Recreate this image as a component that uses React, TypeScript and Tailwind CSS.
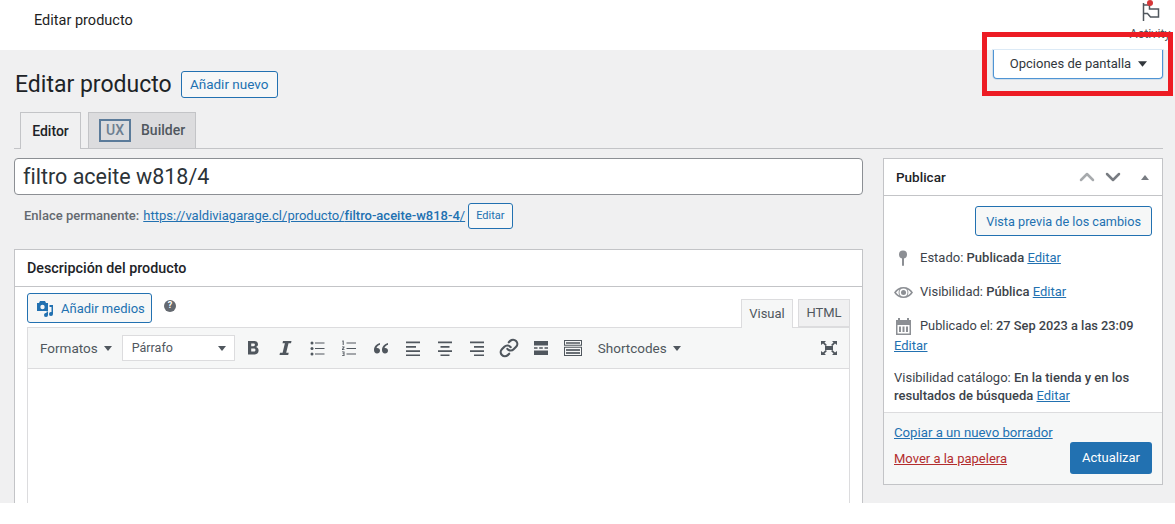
import { ChevronDown, ChevronUp, Link } from 'lucide-react'

const ui = "font-['Roboto',sans-serif]"

function Caret({ className = '' }: { className?: string }) {
  return (
    <svg width="8" height="5" viewBox="0 0 8 5" className={className}>
      <path d="M0 0h8L4 5z" fill="currentColor" />
    </svg>
  )
}

function ToolIcon({ children }: { children: React.ReactNode }) {
  return (
    <svg width="20" height="20" viewBox="0 0 20 20" className="text-[#50575e]" fill="currentColor">
      {children}
    </svg>
  )
}

const tools = [
  <path key="b" fillRule="evenodd" d="M5 3h6c2.500 0 4 1.200 4 3.300 0 1.400-.8 2.300-2 2.800 1.600.4 2.600 1.600 2.600 3.400 0 2.500-1.800 4-4.600 4H5zm3.200 2.400v2.800h2.200c1 0 1.500-.5 1.500-1.400s-.5-1.400-1.500-1.400zm0 5.100v3.100h2.500c1.200 0 1.800-.6 1.800-1.550s-.6-1.550-1.800-1.550z" />,
  <path key="i" d="M8 3h8.500L16 5.200h-2.500L11.200 14.800h2.500l-.5 2.200H4.500l.5-2.200h2.600L9.900 5.200H7.500z" />,
  <g key="ul"><circle cx="5" cy="5" r="1.500" /><circle cx="5" cy="10.500" r="1.500" /><circle cx="5" cy="16" r="1.500" /><path d="M8 4.400h9.500v1.200H8zM8 9.900h9.500v1.200H8zM8 15.400h9.500v1.200H8z" /></g>,
  <g key="ol"><path d="M7.500 4.400H17v1.200H7.500zM7.500 9.900H17v1.200H7.500zM7.500 15.400H17v1.200H7.500z" /><path d="M3.500 2.500h1.200v4.500H3.700V3.500h-.7zM3 8.500h2.500v1L4 11.200h1.500v.8H3v-.9l1.500-1.800H3zM3 13.500h2.500v4.500H3v-.7h1.500v-1.200h-1v-.6h1v-1.300H3z" /></g>,
  <path key="q" d="M9 5C5.500 6 3 8.500 3 12c0 2 1.200 3.500 3 3.500S9 14.200 9 12.700c0-1.600-1.200-2.700-2.700-2.700-.3 0-.6 0-.8.100.4-1.400 1.800-2.700 3.500-3.300zm8 0c-3.500 1-6 3.500-6 7 0 2 1.200 3.500 3 3.500s3-1.300 3-2.800c0-1.600-1.200-2.700-2.700-2.700-.3 0-.6 0-.8.100.4-1.400 1.800-2.700 3.500-3.300z" />,
  <path key="al" d="M3 3.500h14V5.200H3zM3 8h10v1.700H3zM3 12.300h14V14H3zM3 16.500h14v1.500H3z" />,
  <path key="ac" d="M3 3.500h14V5.200H3zM5.500 8h9v1.700h-9zM3 12.300h14V14H3zM5.500 16.500h9V18h-9z" />,
  <path key="ar" d="M3 3.500h14V5.200H3zM7 8h10v1.700H7zM3 12.300h14V14H3zM7 16.500h10V18H7z" />,
  <Link key="ln" x="0" y="0" width="20" height="20" strokeWidth={2.600} fill="none" />,
  <path key="mr" d="M3 3h14v4.500H3zM3 9.300h3.500v1.400H3zM8.200 9.300h3.600v1.400H8.200zM13.500 9.300H17v1.400h-3.500zM3 12.500h14V17H3z" />,
  <g key="kb">
    <path fillRule="evenodd" d="M1 2h18v5.800H1zm1 1v3.800h16V3zM1 8.800h18V18H1zm1 1V17h16V9.800z" />
    <path d="M3 4h14v2H3z" opacity=".75" />
    <path d="M3 11h14v2H3zM3 14h14v2H3z" opacity=".85" />
  </g>,
]

export default function App() {
  return (
    <div className={`${ui} relative h-[524px] w-[1175px] overflow-hidden bg-white text-[13px] text-[#3c434a] [font-variant-ligatures:none]`}>
      <header className="flex h-[50px] items-center pl-[34px] pb-[8px] text-[14.500px] text-[#1e1e1e]">Editar producto</header>

      <main className="flex h-[453px] flex-col overflow-hidden bg-[#f0f0f1] pl-[14px] pr-[12px] pt-[21px]">
        <div className="flex h-[27px] items-center gap-[9px]">
          <h1 className="pl-px text-[23px] leading-[27px] text-[#1d2327]">Editar producto</h1>
          <button className="h-[27px] w-[97px] rounded-[3px] border border-[#2271b1] bg-[#f6f7f7] text-[13.500px] text-[#2271b1]">Añadir nuevo</button>
        </div>

        <div className="mt-[14px] flex h-[37px] gap-[7px] border-b border-[#c3c4c7] pl-[6px]">
          <div className="flex h-[37px] w-[61px] items-center justify-center border border-b-0 border-[#c3c4c7] bg-[#f0f0f1] text-[14px] font-medium text-[#1d2327]">Editor</div>
          <div className="flex h-[36px] w-[108px] items-center gap-[10px] border border-b-0 border-[#c3c4c7] bg-[#dcdcde] pl-[10px] text-[14px] text-[#50575e]">
            <span className="flex h-[23px] w-[32px] items-center justify-center border-2 border-[#5b7b9a] font-medium text-[#6d7f91]">UX</span>
            <span className="font-medium">Builder</span>
          </div>
        </div>

        <div className="mt-[9px] flex gap-[20px]">
          <section className="w-[849px]">
            <div className="flex h-[37px] items-center rounded-[4px] border border-[#8c8f94] bg-white pl-[8px] pt-[2px] text-[21.500px] text-[#2c3338]">filtro aceite w818/4</div>
            <div className="mt-[8px] flex h-[26px] items-center pl-[10px] text-[13px] text-[#646970]">
              <span className="font-medium">Enlace permanente:</span>
              <a className="ml-[4px] text-[#2271b1] underline">https://valdiviagarage.cl/producto/<span className="font-medium">filtro-aceite-w818-4</span>/</a>
              <button className="ml-[3px] h-[26px] rounded-[3px] border border-[#2271b1] bg-[#f6f7f7] px-[7px] text-[11px] text-[#2271b1]">Editar</button>
            </div>

            <div className="mt-[20px] h-[260px] border border-[#c3c4c7] bg-white">
              <div className="flex h-[37px] items-center border-b border-[#c3c4c7] pl-[12px] pt-px text-[14.300px] font-medium text-[#1d2327]">Descripción del producto</div>
              <div className="px-[12px] pt-[6px]">
                <div className="flex h-[35px] items-start">
                  <button className="flex h-[30px] w-[125px] items-center gap-[7px] rounded-[3px] border border-[#2271b1] bg-[#f6f7f7] pl-[8px] pt-px text-[#2271b1]">
                    <svg width="18" height="18" viewBox="0 0 18 18" fill="currentColor">
                      <path fillRule="evenodd" d="M1 3h2l1-2h5l1 2h2v8H1zm5.500 1.800a2.200 2.200 0 100 4.400 2.200 2.200 0 000-4.400z" />
                      <path d="M13.500 5H17v9a2 2 0 11-1.500-1.900V7h-2zM10 11.500h2V15a2 2 0 11-1.500-1.900v-1.600z" />
                    </svg>
                    Añadir medios
                  </button>
                  <span className="ml-[12px] mt-[7px] flex h-[12px] w-[12px] items-center justify-center rounded-full bg-[#646970] text-[9px] font-bold text-white">?</span>
                  <div className="ml-auto flex h-[35px] items-end gap-[5px] text-[#50575e]">
                    <div className="relative z-10 flex h-[29px] w-[52px] items-center justify-center border border-b-0 border-[#dcdcde] bg-[#f6f7f7]">Visual</div>
                    <div className="mb-px flex h-[28px] w-[52px] items-center justify-center border border-[#dcdcde] bg-[#f0f0f1]">HTML</div>
                  </div>
                </div>
                <div className="-mt-px border border-[#dcdcde]">
                  <div className="flex h-[41px] items-center border-b border-[#dcdcde] bg-[#f6f7f7] pl-[12px] pr-[11px] text-[13.500px] text-[#50575e]">
                    <span className="flex items-center gap-[6px]">Formatos <Caret /></span>
                    <div className="ml-[10px] flex h-[26px] w-[113px] items-center justify-between border border-[#dcdcde] bg-white pl-[9px] pr-[8px] text-[12.500px]">Párrafo <Caret /></div>
                    <div className="ml-[8px] flex gap-[12px]">
                      {tools.map((t, i) => <ToolIcon key={i}>{t}</ToolIcon>)}
                    </div>
                    <span className="ml-[15px] flex items-center gap-[6px]">Shortcodes <Caret /></span>
                    <svg width="18" height="16" viewBox="0 0 18 16" fill="currentColor" className="ml-auto">
                      <path d="M1 1h5L4.500 2.500 7 5 5.500 6 3 3.500 1 5zM17 1v4l-2-1.500L12.500 6 11 5l2.500-2.500L12 1zM1 15v-4l2 1.500L5.500 10 7 11l-2.500 2.500L6 15zM17 15h-5l1.500-1.500L11 11l1.500-1 2.500 2.500L17 11z" />
                      <rect x="5" y="6" width="8" height="4" />
                    </svg>
                  </div>
                  <div className="h-[140px] bg-white" />
                </div>
              </div>
            </div>
          </section>

          <aside className="h-[327px] w-[280px] border border-[#c3c4c7] bg-white">
            <div className="flex h-[37px] items-center border-b border-[#c3c4c7] pl-[12px] pr-[13px]">
              <span className="text-[13.500px] font-medium text-[#1d2327]">Publicar</span>
              <ChevronUp size={24} strokeWidth={2.500} className="ml-auto text-[#a7aaad]" />
              <ChevronDown size={24} strokeWidth={2.500} className="ml-[2px] text-[#787c82]" />
              <Caret className="ml-[16px] rotate-180 text-[#787c82]" />
            </div>
            <div className="flex flex-col px-[10px] pt-[10px]">
              <button className="h-[30px] self-end rounded-[3px] border border-[#2271b1] bg-[#f6f7f7] px-[10px] pt-px text-[12.700px] text-[#2271b1]">Vista previa de los cambios</button>
              <div className="mt-[5px] flex h-[34px] items-center gap-[7px]">
                <svg width="19" height="19" viewBox="0 0 19 19" fill="#8c8f94"><circle cx="9" cy="5.500" r="4" /><rect x="8" y="8" width="2" height="9" rx="1" /></svg>
                <span>Estado: <b className="font-medium">Publicada</b> <a className="text-[#2271b1] underline">Editar</a></span>
              </div>
              <div className="flex h-[34px] items-center gap-[7px]">
                <svg width="19" height="19" viewBox="0 0 19 19" fill="#8c8f94"><path fillRule="evenodd" d="M0 9.500C2 6 5.500 4 9.500 4S17 6 19 9.500C17 13 13.500 15 9.500 15S2 13 0 9.500zm9.500-4a4 4 0 100 8 4 4 0 000-8zM2 9.500c1 1.300 2.200 2.300 3.500 3-1.200-2-1.200-4 0-6-1.300.7-2.500 1.700-3.500 3zm11.500-3c1.200 2 1.200 4 0 6 1.300-.7 2.500-1.700 3.500-3-1-1.300-2.200-2.300-3.500-3z" /><circle cx="9.500" cy="9.500" r="2.500" /></svg>
                <span>Visibilidad: <b className="font-medium">Pública</b> <a className="text-[#2271b1] underline">Editar</a></span>
              </div>
              <div className="flex h-[34px] items-center gap-[7px]">
                <svg width="19" height="19" viewBox="0 0 19 19" fill="#8c8f94"><path fillRule="evenodd" d="M2 3h2V1h2v2h7V1h2v2h2v15H2zm1.500 5v8.500h12V8z" /><path d="M5 9.500h2V15H5zM8.500 9.500h2V15h-2zM12 9.500h2V15h-2z" /></svg>
                <span className="text-[12.800px]">Publicado el: <b className="font-medium">27 Sep 2023 a las 23:09</b></span>
              </div>
              <a className="-mt-[6px] leading-[18px] text-[#2271b1] underline">Editar</a>
              <p className="mt-[14px] leading-[18px]">Visibilidad catálogo: <b className="font-medium">En la tienda y en los resultados de búsqueda</b> <a className="text-[#2271b1] underline">Editar</a></p>
            </div>
            <div className="mt-[7px] flex h-[72px] justify-between border-t border-[#dcdcde] bg-[#f6f7f7] pl-[10px] pr-[10px] pt-[10px]">
              <div className="flex flex-col gap-[6px]">
                <a className="text-[13.200px] text-[#2271b1] underline">Copiar a un nuevo borrador</a>
                <a className="text-[#b32d2e] underline">Mover a la papelera</a>
              </div>
              <button className="mt-[19px] h-[32px] w-[82px] rounded-[3px] bg-[#2271b1] text-white">Actualizar</button>
            </div>
          </aside>
        </div>
      </main>

      {/* Activity flag, cut off by the screen options tab */}
      <div className="absolute right-[2px] top-0 flex w-[46px] flex-col items-center text-[12.500px] text-[#50575e]">
        <svg width="46" height="26" viewBox="0 0 46 26" fill="none" stroke="#50575e" strokeWidth="1.500">
          <path d="M16.500 3v18M16.500 5h6v4h9v8h-8l-3-3.500h-4" />
          <circle cx="23" cy="3" r="3" fill="#d63638" stroke="none" />
        </svg>
        <span className="-mt-[1px]">Activity</span>
      </div>

      {/* Screen options tab */}
      <button className="absolute left-[993px] top-[50px] flex h-[29px] w-[170px] items-center justify-center gap-[7px] rounded-b-[4px] border border-t-0 border-[#4f94d4] bg-white pl-[1px] text-[#32373c] shadow-[0_0_0_1px_rgba(79,148,212,.2)]">
        Opciones de pantalla <Caret className="h-[6px] w-[9px]" />
      </button>

      {/* Red highlight added over the screenshot */}
      <div className="absolute left-[982px] top-[32px] h-[64px] w-[191px] border-[5px] border-[#ed1c24]" />
    </div>
  )
}
